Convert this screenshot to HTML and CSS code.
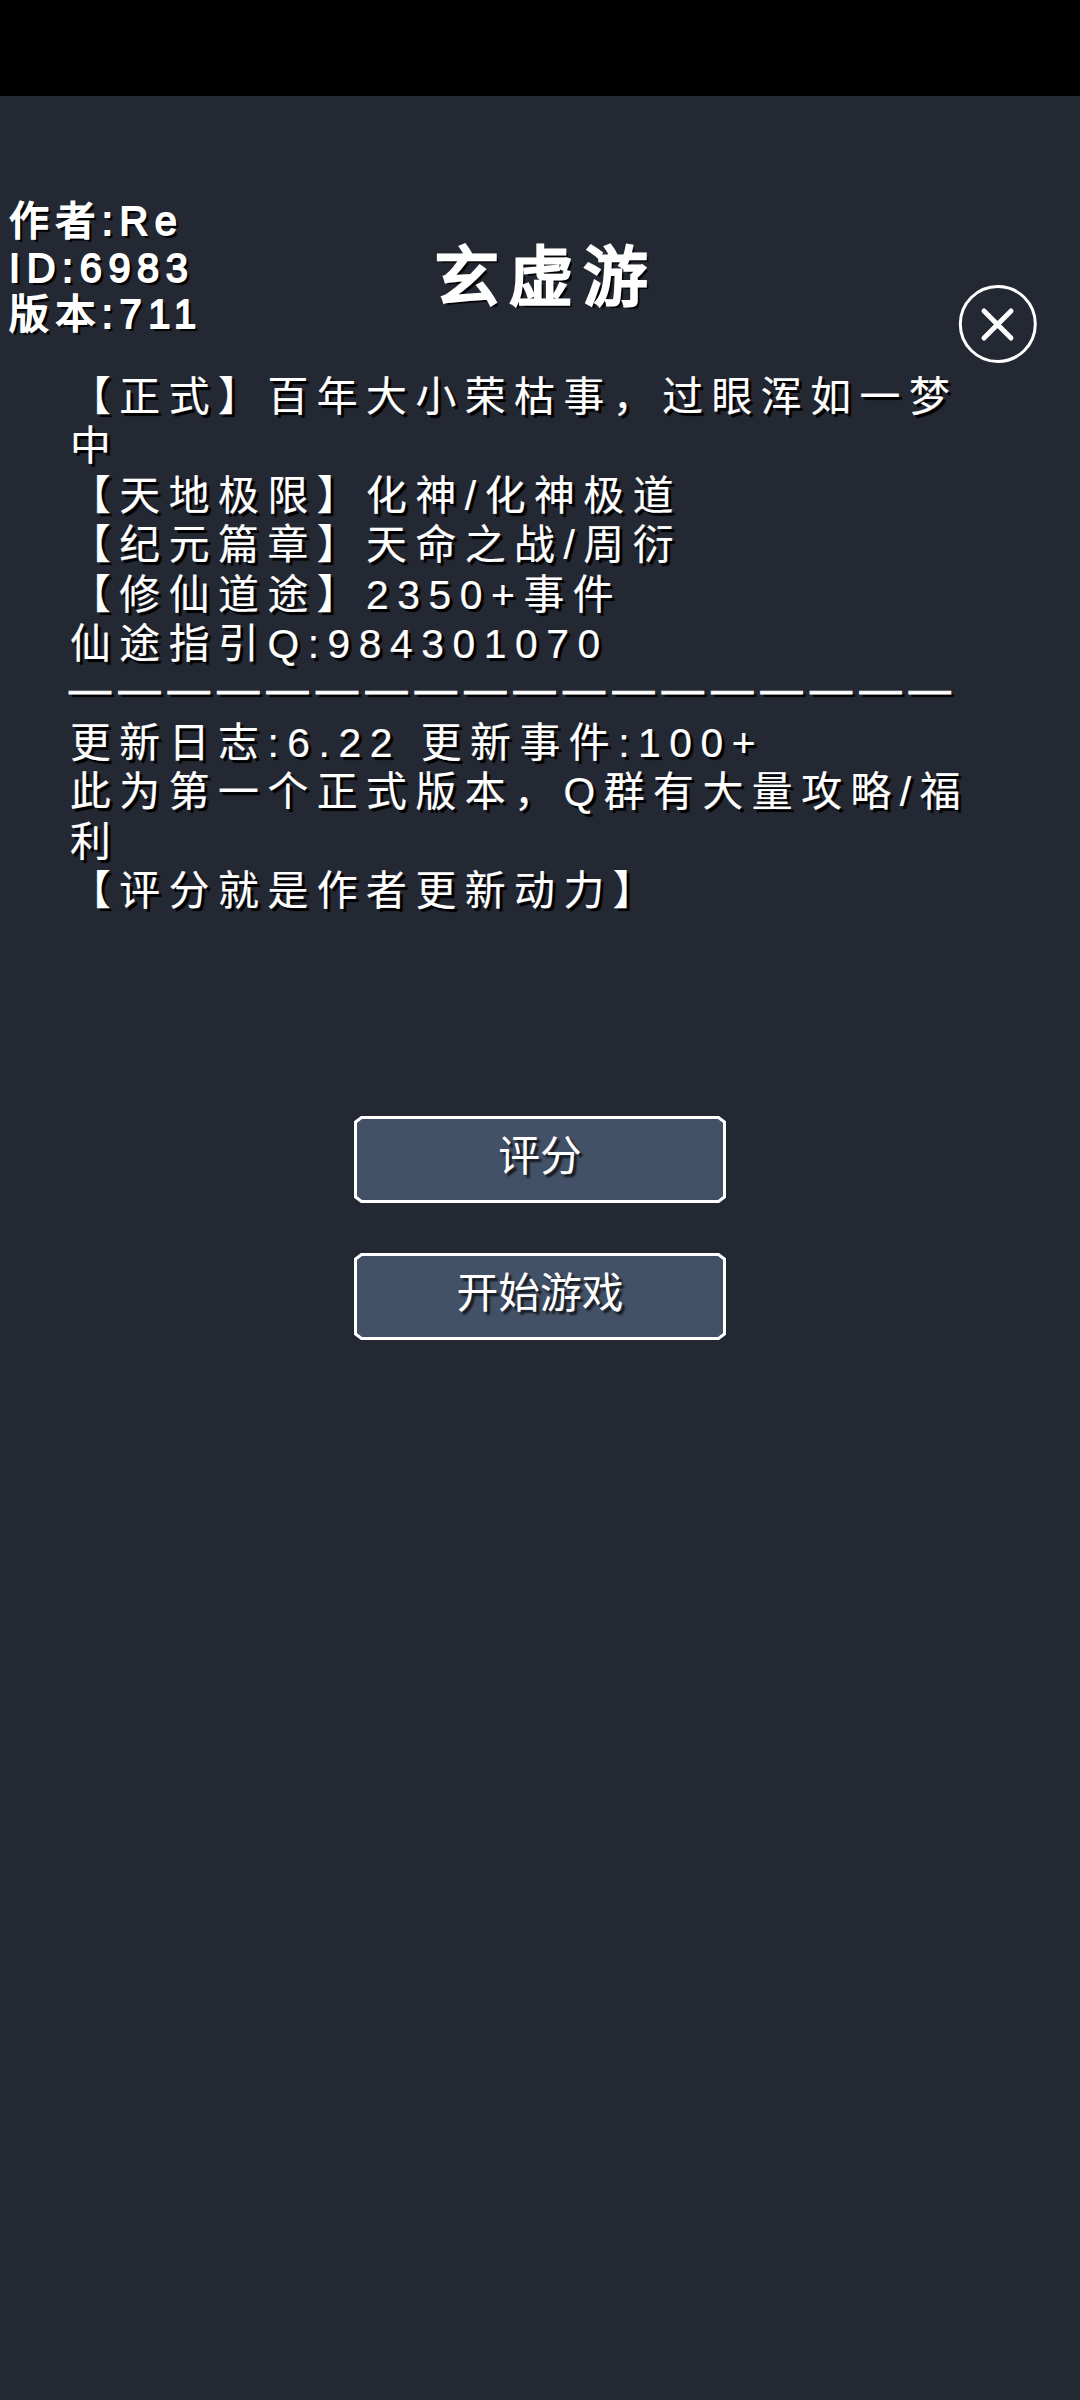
FILE: index.html
```html
<!DOCTYPE html>
<html lang="zh-CN">
<head>
<meta charset="utf-8">
<title>玄虚游</title>
<link rel="stylesheet" href="styles.css">
</head>
<body>
<div class="status-bar"></div>
<header class="header">
  <div class="meta">
    <div>作者:Re</div>
    <div>ID:6983</div>
    <div>版本:711</div>
  </div>
  <h1 class="title">玄虚游</h1>
  <button class="close" aria-label="关闭">
    <svg width="80" height="80" viewBox="0 0 80 80">
      <circle cx="39.8" cy="40" r="37.5"/>
      <path d="M26 27L53 54M53 27L26 54"/>
    </svg>
  </button>
</header>
<main class="notice">
  <p>【正式】百年大小荣枯事，过眼浑如一梦<br>中</p>
  <p>【天地极限】化神/化神极道</p>
  <p>【纪元篇章】天命之战/周衍</p>
  <p>【修仙道途】2350+事件</p>
  <p>仙途指引Q:984301070</p>
  <p class="rule">——————————————————</p>
  <p>更新日志:6.22 更新事件:100+</p>
  <p>此为第一个正式版本，Q群有大量攻略/福<br>利</p>
  <p>【评分就是作者更新动力】</p>
</main>
<div class="actions">
  <button class="action">
    <svg class="frame" width="372" height="87" viewBox="0 0 372 87"><path d="M7.5 1.5H364.5L370.5 6V81L364.5 85.5H7.5L1.5 81V6Z"/></svg>
    <span>评分</span>
  </button>
  <button class="action">
    <svg class="frame" width="372" height="87" viewBox="0 0 372 87"><path d="M7.5 1.5H364.5L370.5 6V81L364.5 85.5H7.5L1.5 81V6Z"/></svg>
    <span>开始游戏</span>
  </button>
</div>
</body>
</html>
```
FILE: styles.css
```css
* {
  box-sizing: border-box;
  margin: 0;
  padding: 0;
}

body {
  width: 1080px;
  height: 2400px;
  background: #242832;
  color: #fff;
  font-family: "Liberation Sans", "Noto Sans CJK SC", sans-serif;
  text-spacing-trim: space-all;
  text-shadow: 3px 3px 1px #000;
  overflow: hidden;
}

button {
  border: 0;
  background: none;
  color: inherit;
  font: inherit;
  text-shadow: inherit;
}

.status-bar {
  height: 96px;
  background: #000;
}

.header {
  display: grid;
  grid-template-columns: 300px 1fr 300px;
  height: 277px;
  padding: 0 8px;
}

.meta {
  padding: 102px 0 0 1px;
  font-size: 39.8px;
  line-height: 46.7px;
  letter-spacing: 6.6px;
  white-space: nowrap;
  -webkit-text-stroke: 1.8px #fff;
}

.title {
  padding-top: 142px;
  padding-left: 12px;
  font-size: 64.5px;
  font-weight: 400;
  line-height: 80px;
  letter-spacing: 9.8px;
  text-align: center;
  -webkit-text-stroke: 3px #fff;
}

.close {
  justify-self: end;
  align-self: start;
  width: 80px;
  height: 80px;
  margin: 188px 34px 0 0;
}

.close svg {
  display: block;
  fill: none;
  stroke: #fff;
  stroke-width: 3;
}

.close path {
  stroke-width: 5;
  stroke-linecap: round;
}

.notice {
  height: 743px;
  padding-left: 70px;
  font-size: 40.8px;
  line-height: 49.4px;
  letter-spacing: 8.55px;
  white-space: nowrap;
  -webkit-text-stroke: .2px #fff;
}

.rule {
  height: 49.4px;
  margin-left: -1px;
  font-size: 42px;
  line-height: 40px;
  letter-spacing: 7.4px;
  -webkit-text-stroke: .8px #fff;
}

.actions {
  display: flex;
  flex-direction: column;
  align-items: center;
  gap: 50px;
}

.action {
  position: relative;
  width: 372px;
  height: 87px;
  padding-bottom: 14px;
  font-size: 41.8px;
  text-shadow: 3px 3px 2px rgba(0, 0, 0, .7);
}

.action span {
  position: relative;
}

.frame {
  position: absolute;
  inset: 0;
  fill: #435166;
  stroke: #fff;
  stroke-width: 3;
}
```
